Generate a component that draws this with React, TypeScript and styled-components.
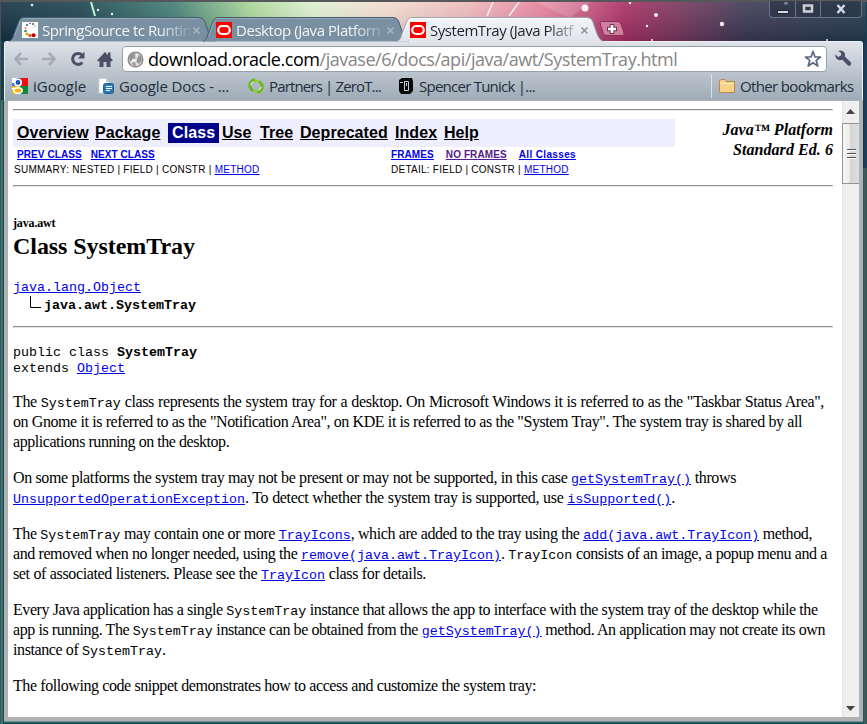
import React from "react";
import styled, { createGlobalStyle } from "styled-components";

const Global = createGlobalStyle`
  *{box-sizing:border-box}
  html,body{margin:0;padding:0;overflow:hidden;background:#285d5c}
`;
const ui = `"Open Sans","Noto Sans",sans-serif`;
const serif = `"Liberation Serif",serif`;
const sans = `"Liberation Sans",sans-serif`;
const mono = `"Liberation Mono",monospace`;

const Win = styled.div`
  width:867px;height:724px;display:flex;flex-direction:column;position:relative;
  padding:0 4px 3px 4px;overflow:hidden;
  background:
    linear-gradient(#55575a,#55575a) 0 0/100% 2px no-repeat,
    linear-gradient(#4c5052,#4c5052) 0 0/1px 100% no-repeat,
    linear-gradient(#2b6865,#2b6865) 4px 722px/859px 1px no-repeat,
    linear-gradient(90deg,#2e7471 0 2px,#1b4b50 2px 3px,#183b46 3px) 1px 100px/3px 100% no-repeat,
    linear-gradient(90deg,#1d3e50,#2e716d 1px,#2a6260 2px,#4c5052 3px) 863px 168px/4px 100% no-repeat,
    linear-gradient(90deg,#1c3348,#22415a) 863px 41px/4px 127px no-repeat,
    #173f50;
`;
const Wallpaper = styled.svg`position:absolute;left:1px;top:2px;width:865px;height:39px;`;
const TabStrip = styled.header`height:41px;position:relative;flex:none;display:flex;align-items:flex-end;padding-left:5px;`;
const TabBox = styled.div<{ $active?: boolean }>`
  width:206px;height:24px;margin-right:-12px;position:relative;z-index:${p => (p.$active ? 3 : 1)};
  display:flex;align-items:center;padding:2px 9px 0 13px;font:15px/20px ${ui};color:${p => (p.$active ? "#1d2430" : "#f1f5f8")};
`;
const TabShape = styled.svg`position:absolute;left:0;top:0;z-index:-1;`;
const TabTitle = styled.span<{ $ls: number }>`
  width:148px;margin-left:4px;white-space:nowrap;letter-spacing:${p => p.$ls}px;
  mask-image:linear-gradient(90deg,#000 118px,transparent 152px);
`;
const TabClose = styled.svg`margin-left:2px;flex:none;`;
const NewTab = styled.svg`margin:0 0 4px 8px;position:relative;z-index:1;`;
const Controls = styled.div`
  position:absolute;right:1px;top:1px;width:93px;height:17px;display:grid;grid-template-columns:25px 25px 1fr;
  border:1px solid #66758a;border-top:0;border-radius:0 0 4px 4px;background:rgba(38,48,66,.6);
`;
const Control = styled.div`
  display:flex;align-items:center;justify-content:center;border-left:1px solid #66758a;
  &:first-child{border-left:0}
`;
const Chrome = styled.div`
  flex:none;height:60px;position:relative;border:1px solid #eef1f4;border-width:1px 1px 0;border-radius:3px 3px 0 0;
  background:linear-gradient(#dfe3e9,#bcc5ce 52%,#9eabb6);border-bottom:1px solid #a9b1bb;
`;
const Toolbar = styled.div`height:32px;display:flex;align-items:center;padding:1px 5px 0 8px;`;
const NavIcon = styled.svg<{ $gap: number }>`margin-right:${p => p.$gap}px;flex:none;`;
const Omnibox = styled.div`
  width:705px;height:26px;margin-top:1px;border:1px solid #96a0aa;border-radius:4px;background:#fff;display:flex;align-items:center;
  padding:0 4px 0 4px;font:18px/24px ${ui};color:#868686;flex:none;
`;
const Wrench = styled.svg`margin-left:8px;flex:none;`;
const Url = styled.span`margin-left:4px;flex:1;white-space:nowrap;letter-spacing:-.46px;b{font-weight:400;color:#000}`;
const Bookmarks = styled.nav`height:26px;display:flex;align-items:center;padding:0 7px 2px 7px;font:15px/20px ${ui};color:#222e40;`;
const Bookmark = styled.div<{ $w: number; $ls: number }>`
  width:${p => p.$w}px;display:flex;align-items:center;gap:5px;white-space:nowrap;letter-spacing:${p => p.$ls}px;
  svg{flex:none}
`;
const Other = styled(Bookmark)`margin-left:auto;padding-left:7px;border-left:1px solid #dbe1e6;height:24px;`;
const Frame = styled.div`
  flex:1;min-height:0;display:flex;border:solid #b2b2b5;border-width:0 4px 4px;border-left-color:#b0b0b2;
  box-shadow:0 1px #6a8f93;
`;
const Page = styled.main`
  flex:1;min-width:0;background:#fff;padding:8px 9px 0 5px;font:16px/20px ${serif};color:#000;overflow:hidden;
`;
const Rule = styled.hr<{ $mb: number }>`border:1px solid;border-color:#8f8f8f #e6e6e6 #e6e6e6 #8f8f8f;height:2px;margin:0 0 ${p => p.$mb}px;`;
const Head = styled.div`display:flex;justify-content:space-between;height:66px;`;
const HeadNav = styled.div`width:662px;`;
const NavBar = styled.div`
  height:28px;background:#eeeeff;display:flex;align-items:center;padding-left:4px;font:bold 16px/18px ${sans};
`;
const NavItem = styled.a<{ $w: number }>`width:${p => p.$w}px;text-decoration:underline;white-space:nowrap;letter-spacing:.06px;`;
const NavCurrent = styled.span`width:51px;height:20px;line-height:20px;margin-right:3px;background:#00008b;color:#fff;padding-left:4px;letter-spacing:.1px;`;
const Small = styled.div<{ $bold?: boolean }>`
  display:grid;grid-template-columns:${p => (p.$bold ? 374 : 377)}px 1fr;height:15px;
  font:${p => (p.$bold ? "bold" : "normal")} 10px/16px ${sans};
  white-space:pre;padding-left:${p => (p.$bold ? 4 : 1)}px;
`;
const SmallGroup = styled.span<{ $ls: number }>`letter-spacing:${p => p.$ls}px;`;
const A = styled.a<{ $visited?: boolean }>`color:${p => (p.$visited ? "#551a8b" : "#0000ee")};text-decoration:underline;`;
const SpacedA = styled(A)`margin-right:9px;`;
const SpacedFrameA = styled(A)`margin-right:12px;`;
const AllClasses = styled(A)`letter-spacing:.35px;`;
const Edition = styled.div`font:italic bold 16px/20px ${serif};text-align:right;padding-top:1px;white-space:nowrap;letter-spacing:.06px;`;
const Pkg = styled.div`font:bold 12px/16px ${serif};margin-top:28px;letter-spacing:-.15px;`;
const Title = styled.h1`font:bold 24px/30px ${serif};margin:0;letter-spacing:-.06px;`;
const Tree = styled.div`font:13.33px/18px ${mono};margin-top:18px;height:47px;`;
const TreeChild = styled.div`display:flex;align-items:center;padding-left:17px;font-weight:bold;svg{margin:-8px 3px 0 0}`;
const Decl = styled.div`font:13.33px/16px ${mono};padding-bottom:15px;`;
const P = styled.p`margin:0 0 16px;`;
const Line = styled.span<{ $w: number; $ls: number }>`
  display:block;width:${p => p.$w}px;white-space:nowrap;text-align-last:justify;height:20px;letter-spacing:${p => p.$ls}px;
`;
const Code = styled.code`font:13.33px/16px ${mono};letter-spacing:0;`;
const Scroll = styled.aside`
  width:17px;flex:none;background:linear-gradient(90deg,#e2e2e2,#efefef 2px,#f0f0f0);display:flex;flex-direction:column;align-items:center;
`;
const Arrow = styled.svg<{ $mt?: boolean }>`margin-top:${p => (p.$mt ? "auto" : "8px")};margin-bottom:${p => (p.$mt ? "6px" : "9px")};flex:none;`;
const Thumb = styled.div`
  width:17px;height:61px;flex:none;border:1px solid #949494;border-right:0;border-radius:1px 0 0 1px;display:flex;flex-direction:column;align-items:center;justify-content:center;gap:2px;
  background:linear-gradient(90deg,#f8f8f8,#ececec 40%,#d5d5d8 45%,#dededf);
`;
const Grip = styled.i`width:9px;height:2px;background:linear-gradient(#555 50%,#fff 50%);`;

const Oracle = () => (
  <svg width="16" height="16"><rect width="16" height="16" fill="#f00" /><rect x="2.200" y="4" width="11.600" height="8" rx="4" fill="none" stroke="#fff" strokeWidth="2.200" /></svg>
);
const springDots: [number, number, number, string][] = [
  [11, 2, 1, "#555"], [8, 1.5, .8, "#339"], [5, 3, 1, "#357"], [3.5, 6, 1.1, "#e83"], [3.5, 9, 1.3, "#386"],
  [5, 12, 1.5, "#d9a400"], [8, 13.5, 1.7, "#c63"], [11.6, 13.3, 2, "#c00000"], [13, 4, .7, "#88a"],
];
const Spring = () => (
  <svg width="16" height="16"><rect width="16" height="16" fill="#fff" />
    {springDots.map(([x, y, r, c], i) => <circle key={i} cx={x} cy={y} r={r} fill={c} />)}
  </svg>
);
const stars = [[31, 3, 1.3], [97, 8, 1.2], [111, 12, 1.2], [584, 6, 3.5], [655, 13, 2], [646, 24, 1.2], [721, 22, 2.2], [785, 1, 2], [629, 1, 1.2], [651, 38, 1], [826, 38, 1]];

const Tab = ({ title, icon, active, ls }: { title: string; icon: React.ReactNode; active?: boolean; ls: number }) => (
  <TabBox $active={active}>
    <TabShape width="206" height="25">
      <defs><linearGradient id="act" x2="0" y2="1"><stop stopColor="#f3f5f7" /><stop offset="1" stopColor="#e0e4ea" /></linearGradient></defs>
      <path d="M-1 24.5 C3 24 4 20 5 17 L10 4 Q11.500 .5 15 .5 H190 Q194 .5 195.500 4 L200 17 Q203 24 207 24.500" fill={active ? "url(#act)" : "#7990a2"} stroke={active ? "#9aa4ae" : "#465d70"} />
      <path d="M6 18 L11 4.500 Q12 1.500 15 1.500 H190" fill="none" stroke={active ? "#fff" : "#94a7b5"} />
    </TabShape>
    {icon}<TabTitle $ls={ls}>{title}</TabTitle>
    <TabClose width="9" height="9"><path d="M1.500 1.500 7.500 7.500 M7.500 1.500 1.500 7.500" stroke={active ? "#8f949b" : "#a7b5c0"} strokeWidth="1.600" /></TabClose>
  </TabBox>
);

export default function App() {
  return (
    <Win>
      <Global />
      <Wallpaper viewBox="0 0 865 39">
        <defs>
          <linearGradient id="sky"><stop stopColor="#112f40" /><stop offset=".09" stopColor="#173f4b" /><stop offset=".2" stopColor="#3d7b70" /><stop offset=".29" stopColor="#a8d696" /><stop offset=".36" stopColor="#def0cf" /><stop offset=".44" stopColor="#f2ddd0" /><stop offset=".54" stopColor="#edb7b9" /><stop offset=".63" stopColor="#e47d98" /><stop offset=".72" stopColor="#a82a60" /><stop offset=".79" stopColor="#713257" /><stop offset=".86" stopColor="#3a3550" /><stop offset="1" stopColor="#203647" /></linearGradient>
          <linearGradient id="shade" x2="0" y2="1"><stop stopColor="#fff" stopOpacity=".12" /><stop offset="1" stopColor="#102030" stopOpacity=".15" /></linearGradient>
        </defs>
        <rect width="865" height="39" fill="url(#sky)" /><rect width="865" height="39" fill="url(#shade)" />
        <path d="M90 0 94 14" stroke="#bff2df" strokeWidth="2" /><path d="M492 0 486 14 M518 0 508 14" stroke="#fff" strokeWidth="1.500" opacity=".8" />
        <path d="M535 0 568 16 590 0Z" fill="#fff" opacity=".15" />
        {stars.map((s, i) => <circle key={i} cx={s[0]} cy={s[1]} r={s[2]} fill="#fff" opacity=".9" />)}
      </Wallpaper>
      <TabStrip>
        <Tab title="SpringSource tc Runtin" icon={<Spring />} ls={-0.45} />
        <Tab title="Desktop (Java Platforn" icon={<Oracle />} ls={-0.45} />
        <Tab title="SystemTray (Java Platf" icon={<Oracle />} active ls={-0.45} />
        <NewTab width="27" height="16"><path d="M1 2 Q1 .5 3 .5 H18 Q21 .5 22 3 L25 12 Q25.500 14.500 23 14.500 H8 Q5 14.500 4 12Z" fill="#cf809f" stroke="#8f2d58" /><path d="M13 3v10M8 8h10" stroke="#7d2b50" strokeWidth="4.500" /><path d="M13 4v8M9 8h8" stroke="#fff" strokeWidth="2.600" /></NewTab>
        <Controls>
          <Control><svg width="12" height="10"><rect x=".5" y="6.500" width="11" height="3" fill="#d6dae0" stroke="#20293a" /></svg></Control>
          <Control><svg width="12" height="10"><rect x="2" y="1.500" width="8" height="6" fill="none" stroke="#cdd1d8" strokeWidth="2.500" /></svg></Control>
          <Control><svg width="12" height="10"><path d="M2.500 1 9.500 9M9.500 1 2.500 9" stroke="#d4d8df" strokeWidth="2.500" /></svg></Control>
        </Controls>
      </TabStrip>
      <Chrome>
        <Toolbar>
          <NavIcon $gap={12} width="16" height="16" fill="none" stroke="#a5abb4" strokeWidth="2.600"><path d="M15 8H3M8 2 2.500 8 8 14" /></NavIcon>
          <NavIcon $gap={13} width="16" height="16" fill="none" stroke="#a5abb4" strokeWidth="2.600"><path d="M1 8h12M8 2l5.500 6L8 14" /></NavIcon>
          <NavIcon $gap={11} width="16" height="16"><path d="M12.300 11.500A5.500 5.500 0 1 1 12 4" fill="none" stroke="#4d4f66" strokeWidth="3" /><path d="M14.500 .8V7.500H7.800Z" fill="#4d4f66" /></NavIcon>
          <NavIcon $gap={9} width="16" height="16"><path d="M0 9.500 8 1 11 4V1.500h2.500V6.500L16 9.500 14 10.500 13.500 10V16H9.500V11H6.500v5H2.500V10L2 10.500Z" fill="#4d4f66" /></NavIcon>
          <Omnibox>
            <svg width="17" height="17"><circle cx="8.500" cy="8.500" r="7.300" fill="#dedede" stroke="#8c8c8c" strokeWidth="1.500" /><path d="M3 4Q6 1.500 9 2.500L7.500 5 9 7 5.500 8 3.500 11 2 8ZM11 4 14 5 15 9 12 13 9.500 11 10 8ZM5 12 8 11 9 14 7 15Z" fill="#949494" /><path d="M9 3 11 6M5 9 9 10" stroke="#fff" /></svg>
            <Url><b>download.oracle.com</b>/javase/6/docs/api/java/awt/SystemTray.html</Url>
            <svg width="18" height="18" viewBox="0 0 18 18"><path d="M9 1.500 11 7H16.500L12.200 10.300 13.800 16 9 12.700 4.200 16 5.800 10.300 1.500 7H7Z" fill="#fff" stroke="#596780" strokeWidth="1.700" strokeLinejoin="round" /></svg>
          </Omnibox>
          <Wrench width="17" height="17"><path d="M3 1Q6.500 -.5 9 2 10.500 4 9.800 6.500L16 12.500Q17 15.500 13.500 16L7.300 9.800Q3.500 11 1.200 8.300 0 6.500 .3 4.500L3.200 7 6 5.500 6.200 3Z" fill="#4d4f6a" /></Wrench>
        </Toolbar>
        <Bookmarks>
          <Bookmark $w={86} $ls={0.02}><svg width="16" height="16"><rect width="8" height="8" fill="#3b7ae0" /><rect x="8" width="8" height="8" fill="#e11" /><rect y="8" width="8" height="8" fill="#f4b400" /><rect x="8" y="8" width="8" height="8" fill="#11893a" /><path d="M0 0H5L2 5H0ZM0 10 4 9 0 12Z" fill="#fff" /><circle cx="6" cy="4.500" r="3.200" fill="#1d55b8" stroke="#fff" strokeWidth="1.600" /><ellipse cx="6" cy="12.500" rx="4.200" ry="2.800" fill="#f6b31a" stroke="#fff" strokeWidth="1.600" /></svg>iGoogle</Bookmark>
          <Bookmark $w={150} $ls={-0.1}><svg width="16" height="16"><path d="M1 .5H8L11 4V15H1Z" fill="#fff" stroke="#c9d3dc" /><path d="M8 .5 11 4H8Z" fill="#bcc8d4" /><rect x="5.500" y="5.500" width="10" height="10" rx="2" fill="#2a78b5" stroke="#1c5f96" /><path d="M8 8.500h6M8 10.500h6M8 12.500h4" stroke="#fff" /></svg>Google Docs - ...</Bookmark>
          <Bookmark $w={150} $ls={-0.85}><svg width="16" height="16"><path d="M7 1.500Q1 3 1.800 9L5 13M9 14.500Q15 13 14.200 7L11 3" fill="none" stroke="#6eb51e" strokeWidth="2.800" /><path d="M7 0 11 3 7 5.500ZM9 16 5 13 9 10.500Z" fill="#8bd52d" /><path d="M5 3.500 2.500 7M11 12.500 13.500 9" stroke="#eaffc8" /></svg>Partners | ZeroT...</Bookmark>
          <Bookmark $w={150} $ls={-0.75}><svg width="16" height="16"><path d="M1 2 4 0H14L15 3V13L12 16H3L1 13Z" fill="#080808" /><path d="M2 4.500H5M6.500 3V13M6.500 3.500H10.500V12.500H6.500M8.500 5V8" stroke="#c5ced6" fill="none" /></svg>Spencer Tunick |...</Bookmark>
          <Other $w={144} $ls={-0.65}><svg width="16" height="14"><path d="M.5 3V2L2 .5H6L7.500 2.500H15.500V13.500H.5Z" fill="#f7d389" stroke="#b98a45" /><path d="M1.500 4.500H14.500" stroke="#ffedc0" /></svg>Other bookmarks</Other>
        </Bookmarks>
      </Chrome>
      <Frame>
        <Page>
          <Rule $mb={8} />
          <Head>
            <HeadNav>
              <NavBar>
                <NavItem $w={78}>Overview</NavItem><NavItem $w={73}>Package</NavItem><NavCurrent>Class</NavCurrent>
                <NavItem $w={38}>Use</NavItem><NavItem $w={40}>Tree</NavItem><NavItem $w={95}>Deprecated</NavItem><NavItem $w={49}>Index</NavItem><NavItem $w={40}>Help</NavItem>
              </NavBar>
              <Small $bold><SmallGroup $ls={0.08}><SpacedA>PREV CLASS</SpacedA><A>NEXT CLASS</A></SmallGroup><SmallGroup $ls={0.1}><SpacedFrameA>FRAMES</SpacedFrameA><SpacedFrameA $visited>NO FRAMES</SpacedFrameA><AllClasses>All Classes</AllClasses></SmallGroup></Small>
              <Small><SmallGroup $ls={0.26}>SUMMARY: NESTED | FIELD | CONSTR | <A>METHOD</A></SmallGroup><SmallGroup $ls={0.25}>DETAIL: FIELD | CONSTR | <A>METHOD</A></SmallGroup></Small>
            </HeadNav>
            <Edition>Java™ Platform<br />Standard Ed. 6</Edition>
          </Head>
          <Rule $mb={0} />
          <Pkg>java.awt</Pkg>
          <Title>Class SystemTray</Title>
          <Tree><A>java.lang.Object</A><TreeChild><svg width="11" height="12"><path d="M.5 0V11.500H11" fill="none" stroke="#000" /></svg>java.awt.SystemTray</TreeChild></Tree>
          <Rule $mb={17} />
          <Decl>public class <b>SystemTray</b><br />extends <A>Object</A></Decl>
          <P><Line $ls={-0.38} $w={811}>The <Code>SystemTray</Code> class represents the system tray for a desktop. On Microsoft Windows it is referred to as the "Taskbar Status Area",</Line><Line $ls={-0.43} $w={789}>on Gnome it is referred to as the "Notification Area", on KDE it is referred to as the "System Tray". The system tray is shared by all</Line><Line $ls={-0.45} $w={216}>applications running on the desktop.</Line></P>
          <P><Line $ls={-0.38} $w={723}>On some platforms the system tray may not be present or may not be supported, in this case <A><Code>getSystemTray()</Code></A> throws</Line><Line $ls={-0.34} $w={662}><A><Code>UnsupportedOperationException</Code></A>. To detect whether the system tray is supported, use <A><Code>isSupported()</Code></A>.</Line></P>
          <P><Line $ls={-0.4} $w={799}>The <Code>SystemTray</Code> may contain one or more <A><Code>TrayIcons</Code></A>, which are added to the tray using the <A><Code>add(java.awt.TrayIcon)</Code></A> method,</Line><Line $ls={-0.42} $w={814}>and removed when no longer needed, using the <A><Code>remove(java.awt.TrayIcon)</Code></A>. <Code>TrayIcon</Code> consists of an image, a popup menu and a</Line><Line $ls={-0.36} $w={413}>set of associated listeners. Please see the <A><Code>TrayIcon</Code></A> class for details.</Line></P>
          <P><Line $ls={-0.42} $w={803}>Every Java application has a single <Code>SystemTray</Code> instance that allows the app to interface with the system tray of the desktop while the</Line><Line $ls={-0.42} $w={812}>app is running. The <Code>SystemTray</Code> instance can be obtained from the <A><Code>getSystemTray()</Code></A> method. An application may not create its own</Line><Line $ls={-0.4} $w={152}>instance of <Code>SystemTray</Code>.</Line></P>
          <P><Line $ls={-0.43} $w={523}>The following code snippet demonstrates how to access and customize the system tray:</Line></P>
        </Page>
        <Scroll>
          <Arrow width="9" height="5"><path d="M0 5 4.500 0 9 5Z" fill="#444" /></Arrow>
          <Thumb><Grip /><Grip /><Grip /></Thumb>
          <Arrow $mt width="9" height="5"><path d="M0 0H9L4.500 5Z" fill="#444" /></Arrow>
        </Scroll>
      </Frame>
    </Win>
  );
}
